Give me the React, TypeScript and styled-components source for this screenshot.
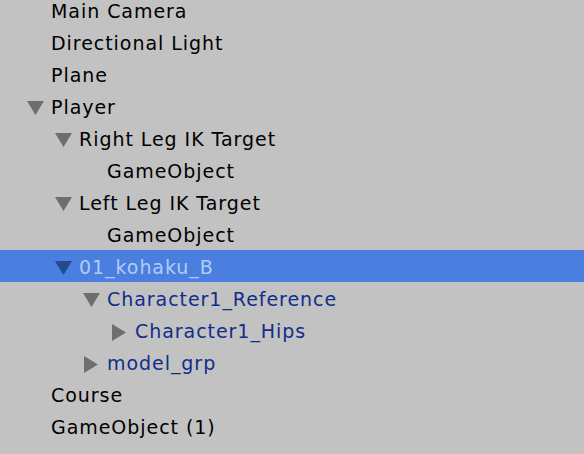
import styled, { createGlobalStyle } from 'styled-components';

const GlobalStyle = createGlobalStyle`
	html, body {
		margin: 0;
		padding: 0;
		background: #c2c2c2;
	}
	body {
		width: 584px;
		height: 454px;
		overflow: hidden;
		font-family: 'DejaVu Sans', 'Liberation Sans', sans-serif;
	}
`

type Node = {
	name: string;
	depth: number;
	open?: boolean;
	prefab?: boolean;
	selected?: boolean;
};

const nodes: Node[] = [
	{ name: 'Main Camera', depth: 0 },
	{ name: 'Directional Light', depth: 0 },
	{ name: 'Plane', depth: 0 },
	{ name: 'Player', depth: 0, open: true },
	{ name: 'Right Leg IK Target', depth: 1, open: true },
	{ name: 'GameObject', depth: 2 },
	{ name: 'Left Leg IK Target', depth: 1, open: true },
	{ name: 'GameObject', depth: 2 },
	{ name: '01_kohaku_B', depth: 1, open: true, prefab: true, selected: true },
	{ name: 'Character1_Reference', depth: 2, open: true, prefab: true },
	{ name: 'Character1_Hips', depth: 3, open: false, prefab: true },
	{ name: 'model_grp', depth: 2, open: false, prefab: true },
	{ name: 'Course', depth: 0 },
	{ name: 'GameObject (1)', depth: 0 },
];

// list is scrolled a few pixels, so the first row is clipped at the top
const Hierarchy = styled.div`
	display: flex;
	flex-direction: column;
	margin-top: -6px;
`

const Row = styled.div<{ $depth: number; $selected?: boolean }>`
	display: flex;
	align-items: center;
	height: 32px;
	padding-left: ${p => 23 + p.$depth * 28}px;
	background: ${p => p.$selected ? '#4a7fe0' : 'transparent'};
`

const Toggle = styled.div`
	width: 28px;
	height: 32px;
	flex: none;
	display: flex;
	align-items: center;
	padding-left: 4px;
	padding-top: 4px;
	box-sizing: border-box;
`

const Label = styled.span<{ $prefab?: boolean; $selected?: boolean }>`
	font-size: 19px;
	letter-spacing: 0.95px;
	line-height: 32px;
	padding-top: 1px;
	white-space: nowrap;
	color: ${p => p.$selected ? '#b3cbf4' : p.$prefab ? '#102d8c' : '#000000'};
`

function Arrow({ open, selected }: { open: boolean; selected?: boolean }) {
	const fill = selected ? '#27478f' : '#6e6e6e';
	return open ? (
		<svg width='17' height='14' viewBox='0 0 17 14'>
			<polygon points='0,0 17,0 8.5,14' fill={fill} />
		</svg>
	) : (
		<svg width='15' height='17' viewBox='0 0 15 17'>
			<polygon points='1,0 15,8.5 1,17' fill={fill} />
		</svg>
	);
}

export default function App() {
	return (
		<>
			<GlobalStyle />
			<Hierarchy>
				{nodes.map((n, i) => (
					<Row key={i} $depth={n.depth} $selected={n.selected}>
						<Toggle>
							{n.open !== undefined && <Arrow open={n.open} selected={n.selected} />}
						</Toggle>
						<Label $prefab={n.prefab} $selected={n.selected}>{n.name}</Label>
					</Row>
				))}
			</Hierarchy>
		</>
	)
}
